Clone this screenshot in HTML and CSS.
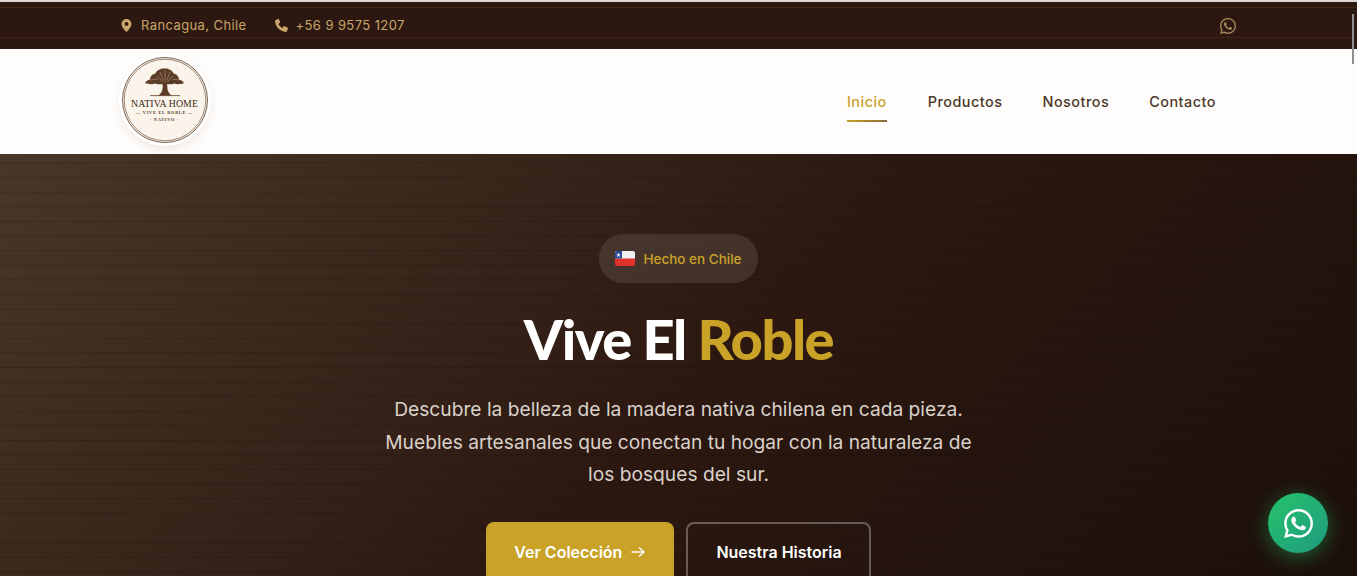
FILE: index.html
```html
<!DOCTYPE html>
<html lang="es">
<head>
    <meta charset="UTF-8">
    <meta name="viewport" content="width=device-width, initial-scale=1.0">
    <title>Nativa Home</title>
    <link rel="stylesheet" href="styles.css">
</head>
<body>

<svg class="sprite" width="0" height="0" aria-hidden="true">
    <symbol id="wa" viewBox="0 0 24 24">
        <path d="M17.472 14.382c-.297-.149-1.758-.867-2.03-.967-.273-.099-.471-.148-.67.15-.197.297-.767.966-.94 1.164-.173.199-.347.223-.644.075-.297-.15-1.255-.463-2.39-1.475-.883-.788-1.48-1.761-1.653-2.059-.173-.297-.018-.458.13-.606.134-.133.298-.347.446-.52.149-.174.198-.298.298-.497.099-.198.05-.371-.025-.52-.075-.149-.669-1.612-.916-2.207-.242-.579-.487-.5-.669-.51-.173-.008-.371-.01-.57-.01-.198 0-.52.074-.792.372-.272.297-1.04 1.016-1.04 2.479 0 1.462 1.065 2.875 1.213 3.074.149.198 2.096 3.2 5.077 4.487.709.306 1.262.489 1.694.625.712.227 1.36.195 1.871.118.571-.085 1.758-.719 2.006-1.413.248-.694.248-1.289.173-1.413-.074-.124-.272-.198-.57-.347m-5.421 7.403h-.004a9.87 9.87 0 01-5.031-1.378l-.361-.214-3.741.982.998-3.648-.235-.374a9.86 9.86 0 01-1.51-5.26c.001-5.45 4.436-9.884 9.888-9.884 2.64 0 5.122 1.03 6.988 2.898a9.825 9.825 0 012.893 6.994c-.003 5.45-4.437 9.884-9.885 9.884m8.413-18.297A11.815 11.815 0 0012.05 0C5.495 0 .16 5.335.157 11.892c0 2.096.547 4.142 1.588 5.945L.057 24l6.305-1.654a11.882 11.882 0 005.683 1.448h.005c6.554 0 11.89-5.335 11.893-11.893a11.821 11.821 0 00-3.48-8.413z"/>
    </symbol>
</svg>

<div class="topbar">
    <div class="container topbar-inner">
        <div class="topbar-info">
            <span class="info-item">
                <svg class="info-icon pin" viewBox="3.600 1 16.800 22"><path d="M12 1C7.300 1 3.600 4.700 3.600 9.400 3.600 15.400 12 23 12 23s8.400-7.600 8.400-13.600C20.400 4.700 16.700 1 12 1zm0 11.600a3.300 3.300 0 1 1 0-6.600 3.300 3.300 0 0 1 0 6.600z"/></svg>
                Rancagua, Chile
            </span>
            <span class="info-item">
                <svg class="info-icon" viewBox="1 1.400 21.700 21.600"><path d="M6.600 1.500 2.800 2.700C1.700 3.100 1 4.100 1.100 5.300c.5 9.200 8.400 17 17.600 17.600 1.200.1 2.200-.6 2.600-1.700l1.200-3.800c.2-.7-.1-1.500-.8-1.800l-4.600-2c-.6-.3-1.400-.1-1.800.4l-1.900 2.300c-2.900-1.400-5.300-3.800-6.700-6.700l2.300-1.900c.5-.4.700-1.200.4-1.800l-2-4.600c-.3-.7-1.100-1-1.800-.8z"/></svg>
                +56 9 9575 1207
            </span>
        </div>
        <svg class="topbar-wa"><use href="#wa"/></svg>
    </div>
</div>

<header class="header">
    <div class="container header-inner">
        <div class="logo">
            <svg viewBox="0 0 86 86" width="86" height="86">
                <circle cx="43" cy="43" r="42.500" fill="#fbf4ea" stroke="#5a3d2b" stroke-width=".8"/>
                <circle cx="43" cy="43" r="40.800" fill="none" stroke="#5a3d2b" stroke-width=".6"/>
                <g fill="#5c3c26">
                    <path d="M23 26c1-2 3-3 5-3.500 0-3 2.500-5.500 5.500-6 1-3 5-5.500 9-5 4-.5 8 2 9 5 3 .5 5.500 3 5.500 6 2 .5 4 1.500 5 3.500-3 1.500-7 1.500-10 .5-2 1-4.500 1-6.500.5l-1.500 1.500h-3L40 27c-2 .5-4.500.5-6.500-.5-3 1-7.500 1-10.500-.5z"/>
                    <path d="M41 25h4l.4 6c.2 3 1.300 5.300 4.100 7.500h-13c2.800-2.200 3.900-4.500 4.100-7.500z"/>
                    <path d="M28 38.300h30v.8H28z"/>
                </g>
                <g fill="none" stroke="#fbf4ea" stroke-width=".5" opacity=".6">
                    <path d="M41 25l-6-6M41 23l-3-8M45 25l6-6M45 23l3-8M43 25v-12M36 22l-8 1M50 22l8 1"/>
                </g>
                <text class="logo-title" x="42.500" y="50" text-anchor="middle">NATIVA HOME</text>
                <text class="logo-small" x="42.500" y="56.500" text-anchor="middle">— VIVE EL ROBLE —</text>
                <text class="logo-small" x="42.500" y="63.500" text-anchor="middle">· NATIVO ·</text>
            </svg>
        </div>
        <nav class="nav">
            <a class="nav-link active" href="#">Inicio</a>
            <a class="nav-link" href="#">Productos</a>
            <a class="nav-link" href="#">Nosotros</a>
            <a class="nav-link" href="#">Contacto</a>
        </nav>
    </div>
</header>

<section class="hero">
    <div class="badge">
        <svg class="flag" viewBox="0 0 20 15">
            <rect width="20" height="15" rx="2" fill="#e0312b"/>
            <path d="M2 0h16a2 2 0 0 1 2 2v5.500H0V2a2 2 0 0 1 2-2z" fill="#f0eff2"/>
            <path d="M2 0h5v7.500H0V2a2 2 0 0 1 2-2z" fill="#2a4d9b"/>
            <path d="m3.500 1.800.6 1.500 1.500.1-1.200 1 .4 1.500-1.300-.8-1.300.8.400-1.500-1.200-1 1.500-.1z" fill="#fff"/>
        </svg>
        Hecho en Chile
    </div>
    <h1 class="hero-title">Vive El <span class="gold">Roble</span></h1>
    <p class="hero-text">Descubre la belleza de la madera nativa chilena en cada pieza. Muebles artesanales que conectan tu hogar con la naturaleza de los bosques del sur.</p>
    <div class="hero-actions">
        <a class="btn btn-gold" href="#">Ver Colección
            <svg class="arrow" viewBox="0 0 16 16"><path d="M1.500 8h12.500M9 3.500 14 8l-5 4.500"/></svg>
        </a>
        <a class="btn btn-outline" href="#">Nuestra Historia</a>
    </div>
</section>

<a class="wa-float" href="#"><svg><use href="#wa"/></svg></a>
<div class="scroll-thumb"></div>

</body>
</html>
```

FILE: styles.css
```css
html {
    overflow: hidden;
    height: 576px;
}
body {
    margin: 0;
    height: 576px;
    overflow: hidden;
    font-family: Inter, "Liberation Sans", sans-serif;
    background: #fffdfb;
}
a {
    text-decoration: none;
}
.sprite {
    position: absolute;
}
.container {
    max-width: 1115px;
    margin: 0 auto;
}

/* top bar */
.topbar {
    height: 47px;
    border-top: 2px solid #d9d6d4;
    background-color: #2c1810;
    background-image: repeating-linear-gradient(180deg, transparent 0, transparent 5px, rgba(139, 90, 43, .2) 5px, rgba(139, 90, 43, .2) 6px, transparent 6px, transparent 30px);
    color: #c9a66b;
    font-size: 13px;
    letter-spacing: .4px;
}
.topbar-inner {
    height: 47px;
    display: flex;
    align-items: center;
    justify-content: space-between;
}
.topbar-info {
    display: flex;
    gap: 28px;
    padding-bottom: 1px;
}
.info-item {
    display: flex;
    align-items: center;
    gap: 8px;
}
.info-icon {
    width: 13px;
    height: 13px;
    fill: #c9a66b;
}
.info-icon.pin {
    width: 11px;
    margin-right: 1px;
}
.topbar-wa {
    width: 16px;
    height: 16px;
    fill: #a8875c;
}

/* header */
.header {
    height: 105px;
    background: #fffdfb;
}
.header-inner {
    display: flex;
    justify-content: space-between;
    height: 105px;
}
.logo {
    width: 86px;
    height: 86px;
    margin: 8px 0 0 1px;
    border-radius: 50%;
    box-shadow: 0 0 0 3px #fff, 0 4px 12px rgba(44, 24, 16, .14);
}
.logo-title {
    font-family: "Liberation Serif", serif;
    font-size: 9.800px;
    letter-spacing: .1px;
    fill: #3d2617;
}
.logo-small {
    font-family: "Liberation Serif", serif;
    font-size: 4.400px;
    font-weight: 700;
    letter-spacing: .7px;
    fill: #5a3d2b;
}
.nav {
    display: flex;
    gap: 40px;
    padding: 43px 20px 0 0;
}
.nav-link {
    height: 28px;
    color: #4a3728;
    font-size: 14.400px;
    font-weight: 500;
    letter-spacing: .5px;
    line-height: 20px;
}
.nav-link.active {
    margin-right: 1px;
    color: #c9a227;
    border-bottom: 2px solid;
    border-image: linear-gradient(90deg, #c9a227, #8b6b3f) 1;
}

/* hero */
.hero {
    padding: 80px 0;
    display: flex;
    flex-direction: column;
    align-items: center;
    text-align: center;
    background-color: #2c1810;
    background-image:
        repeating-linear-gradient(180deg, transparent 0, transparent 8px, rgba(0, 0, 0, .16) 9px, transparent 10px, transparent 14.600px),
        linear-gradient(135deg, #4a3728 0%, #2c1810 50%, #1a0f0a 100%);
}
.badge {
    display: flex;
    align-items: center;
    gap: 8px;
    height: 49px;
    padding: 0 16px;
    box-sizing: border-box;
    border-radius: 25px;
    background: rgba(255, 255, 255, .1);
    color: #c9a227;
    font-size: 13.500px;
    font-weight: 500;
}
.flag {
    width: 20px;
    height: 15px;
}
.hero-title {
    margin: 22px 0 0;
    color: #fff;
    font-family: Lato, Inter, sans-serif;
    font-size: 56px;
    font-weight: 900;
    line-height: 68px;
    letter-spacing: -1.500px;
}
.gold {
    color: #c9a227;
}
.hero-text {
    width: 600px;
    margin: 20px 0 0;
    color: #d9d1c9;
    font-size: 19.200px;
    line-height: 32.640px;
}
.hero-actions {
    display: flex;
    gap: 12px;
    margin-top: 31px;
}
.btn {
    display: flex;
    align-items: center;
    gap: 8px;
    height: 60px;
    border-radius: 8px;
    font-size: 16px;
    font-weight: 600;
    color: #fff;
}
.btn-gold {
    padding: 0 28px;
    background: #c9a227;
}
.btn-outline {
    padding: 0 27px 0 28px;
    height: 56px;
    border: 2px solid rgba(255, 255, 255, .3);
}
.arrow {
    width: 16px;
    height: 16px;
    fill: none;
    stroke: #fff;
    stroke-width: 1.400;
}

/* overlays */
.wa-float {
    position: fixed;
    right: 29px;
    bottom: 23px;
    width: 60px;
    height: 60px;
    display: flex;
    align-items: center;
    justify-content: center;
    border-radius: 50%;
    background: linear-gradient(135deg, #25c36a, #1f9a80);
    box-shadow: 0 4px 20px rgba(37, 211, 102, .4);
}
.wa-float svg {
    width: 29px;
    height: 29px;
    fill: #fff;
}
.scroll-thumb {
    position: fixed;
    top: 14px;
    right: 3px;
    width: 2px;
    height: 50px;
    background: #8f8f8f;
}
```
